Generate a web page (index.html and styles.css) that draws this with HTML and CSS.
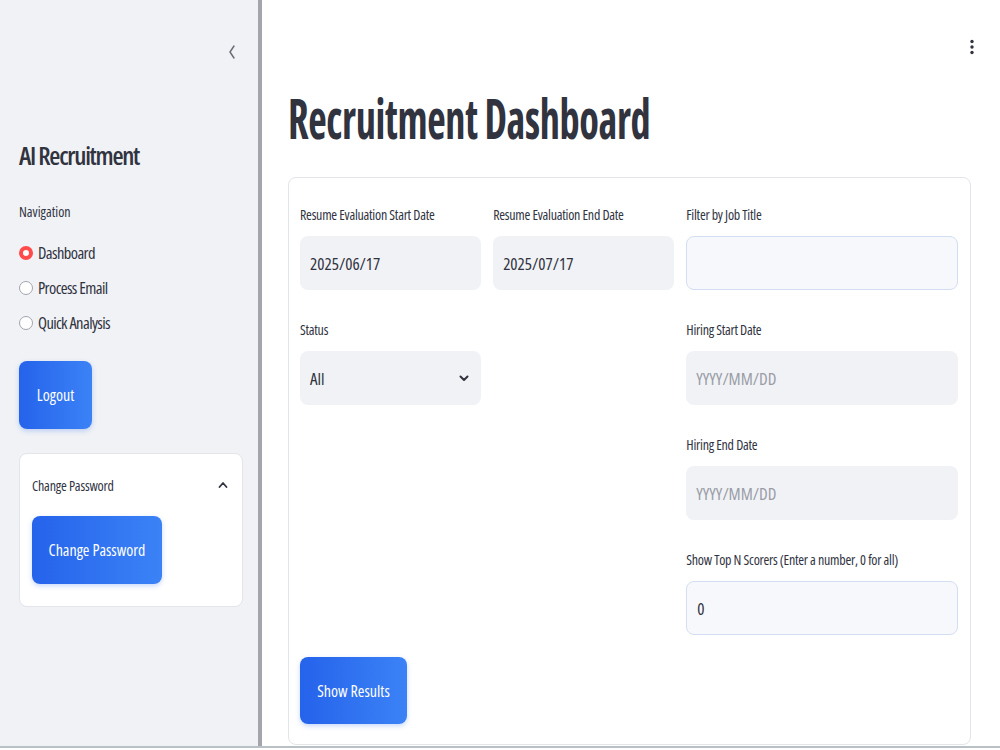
FILE: index.html
```html
<!DOCTYPE html>
<html lang="en">
<head>
<meta charset="utf-8">
<title>Recruitment Dashboard</title>
<link rel="stylesheet" href="styles.css">
</head>
<body>
<div class="app">
  <aside class="sidebar">
    <div class="collapse-row">
      <svg class="collapse" width="10" height="16" viewBox="0 0 10 16"><path d="M7 2 L3 8 L7 14" fill="none" stroke="#6b6d78" stroke-width="1.5" stroke-linecap="round" stroke-linejoin="round"/></svg>
    </div>
    <h2 class="brand">AI Recruitment</h2>
    <div class="nav-label">Navigation</div>
    <div class="radios">
      <div class="radio-row"><span class="radio checked"></span><span>Dashboard</span></div>
      <div class="radio-row"><span class="radio"></span><span>Process Email</span></div>
      <div class="radio-row"><span class="radio"></span><span>Quick Analysis</span></div>
    </div>
    <button class="btn btn-logout">Logout</button>
    <div class="expander">
      <div class="expander-head">
        <span>Change Password</span>
        <svg width="10" height="8" viewBox="0 0 10 8"><path d="M1.5 6 L5 2 L8.5 6" fill="none" stroke="#31333f" stroke-width="1.8" stroke-linecap="round" stroke-linejoin="round"/></svg>
      </div>
      <button class="btn btn-change">Change Password</button>
    </div>
  </aside>
  <main class="main">
    <div class="topbar">
      <svg width="6" height="16" viewBox="0 0 6 16"><circle cx="3" cy="2.5" r="1.7" fill="#31333f"/><circle cx="3" cy="8" r="1.7" fill="#31333f"/><circle cx="3" cy="13.5" r="1.7" fill="#31333f"/></svg>
    </div>
    <h1 class="title">Recruitment Dashboard</h1>
    <section class="form">
      <div class="grid">
        <div class="col">
          <div class="field">
            <label class="label">Resume Evaluation Start Date</label>
            <div class="input filled">2025/06/17</div>
          </div>
          <div class="field">
            <label class="label">Status</label>
            <div class="input filled select"><span>All</span>
              <svg width="10" height="7" viewBox="0 0 10 7"><path d="M1.5 1.5 L5 5 L8.5 1.5" fill="none" stroke="#31333f" stroke-width="2" stroke-linecap="round" stroke-linejoin="round"/></svg>
            </div>
          </div>
        </div>
        <div class="col">
          <div class="field">
            <label class="label">Resume Evaluation End Date</label>
            <div class="input filled">2025/07/17</div>
          </div>
        </div>
        <div class="col">
          <div class="field">
            <label class="label">Filter by Job Title</label>
            <div class="input text"></div>
          </div>
          <div class="field">
            <label class="label">Hiring Start Date</label>
            <div class="input filled placeholder">YYYY/MM/DD</div>
          </div>
          <div class="field">
            <label class="label">Hiring End Date</label>
            <div class="input filled placeholder">YYYY/MM/DD</div>
          </div>
          <div class="field">
            <label class="label">Show Top N Scorers (Enter a number, 0 for all)</label>
            <div class="input text">0</div>
          </div>
        </div>
      </div>
      <button class="btn btn-show">Show Results</button>
    </section>
  </main>
</div>
</body>
</html>
```

FILE: styles.css
```css
* { box-sizing: border-box; }
html, body { margin: 0; padding: 0; }
body {
  font-family: "Open Sans", "Liberation Sans Narrow", sans-serif;
  font-stretch: 75%;
  color: #31333f;
  background: #ffffff;
  width: 1000px;
  height: 750px;
  overflow: hidden;
}
.app {
  display: flex;
  height: 748px;
  border-bottom: 2px solid #b9c0c6;
}
.sidebar {
  width: 262px;
  flex: none;
  background: #f0f2f6;
  border-right: 4px solid #a3a4ac;
  padding: 0 15px 0 19px;
  display: flex;
  flex-direction: column;
  align-items: flex-start;
}
.collapse-row {
  align-self: stretch;
  display: flex;
  justify-content: flex-end;
  padding: 44px 6px 0 0;
  height: 62px;
}
.brand {
  margin: 78px 0 0;
  font-size: 25.5px;
  font-weight: 600;
  line-height: 30px;
  letter-spacing: -1.3px;
}
.nav-label {
  margin-top: 32px;
  font-size: 14px;
  line-height: 20px;
}
.radios {
  margin-top: 19px;
  display: flex;
  flex-direction: column;
  gap: 11px;
}
.radio-row {
  display: flex;
  align-items: center;
  gap: 5px;
  font-size: 16.5px;
  line-height: 24px;
  letter-spacing: -0.6px;
}
.radio {
  width: 14px;
  height: 14px;
  border-radius: 50%;
  border: 1px solid #a3a5ad;
  background: #ffffff;
}
.radio.checked {
  border: 4px solid #ff4b4b;
  background: #ffffff;
}
.btn {
  font-family: inherit;
  font-stretch: 75%;
  border: none;
  border-radius: 8px;
  color: #ffffff;
  font-size: 16px;
  font-weight: 400;
  background: linear-gradient(90deg, #2563eb, #3b82f6);
  box-shadow: 0 2px 5px rgba(37, 99, 235, 0.25);
  padding: 0;
  height: 68px;
}
.btn-logout {
  margin-top: 26px;
  width: 73px;
}
.expander {
  margin-top: 24px;
  width: 224px;
  background: #ffffff;
  border: 1px solid #e3e5ea;
  border-radius: 8px;
  padding: 0 12px 22px 12px;
}
.expander-head {
  display: flex;
  justify-content: space-between;
  align-items: center;
  font-size: 14px;
  height: 62px;
  padding-right: 2px;
  letter-spacing: -0.2px;
}
.btn-change {
  width: 130px;
}
.main {
  flex: 1;
  display: flex;
  flex-direction: column;
  padding: 0 29px 0 26px;
}
.topbar {
  display: flex;
  justify-content: flex-end;
  padding: 39px 0 0 0;
  height: 55px;
  margin-right: -4px;
}
.title {
  margin: 32px 0 0;
  font-size: 56px;
  font-weight: 700;
  line-height: 60px;
  letter-spacing: -0.5px;
  transform: scaleX(0.72);
  transform-origin: left center;
}
.form {
  margin-top: 30px;
  border: 1px solid #e3e5ea;
  border-radius: 8px;
  padding: 26px 12px 20px 11px;
  display: flex;
  flex-direction: column;
  align-items: flex-start;
}
.grid {
  align-self: stretch;
  display: grid;
  grid-template-columns: 2fr 2fr 3fr;
  column-gap: 12px;
}
.col {
  display: flex;
  flex-direction: column;
  gap: 29px;
}
.label {
  display: block;
  font-size: 14px;
  line-height: 22px;
  margin-bottom: 10px;
  letter-spacing: -0.25px;
}
.input {
  height: 54px;
  border-radius: 8px;
  display: flex;
  align-items: center;
  padding: 0 10px;
  font-size: 17px;
}
.input.filled { background: #f0f2f6; }
.input.text {
  background: #f7f8fb;
  border: 1px solid #d3def5;
}
.input.placeholder { color: #9a9ca6; }
.input.select {
  justify-content: space-between;
  padding-right: 12px;
}
.btn-show {
  margin-top: 22px;
  width: 107px;
  height: 67px;
}
```
